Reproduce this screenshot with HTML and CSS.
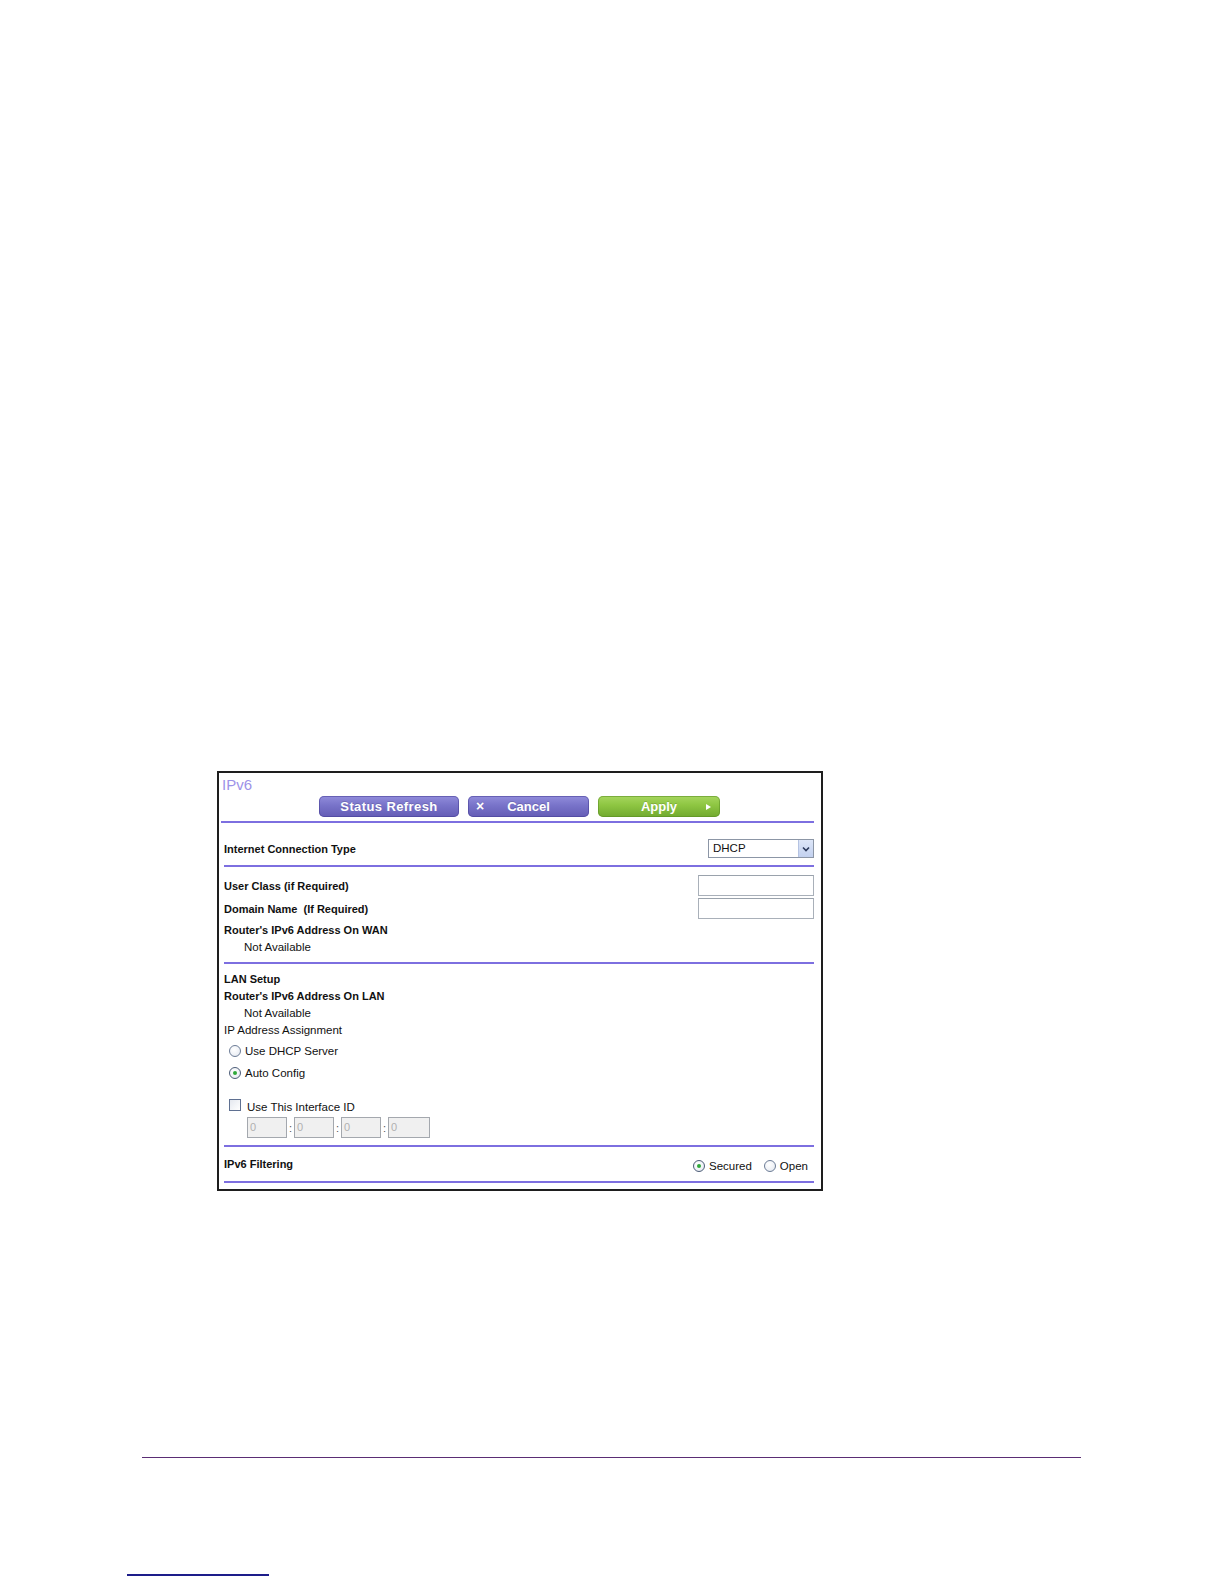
FILE: index.html
```html
<!DOCTYPE html>
<html lang="en">
<head>
<meta charset="utf-8">
<title>IPv6</title>
<link rel="stylesheet" href="styles.css">
</head>
<body>
<div class="page">
  <div class="frame">
    <div class="title">IPv6</div>
    <div class="actions">
      <button class="btn btn-purple btn-status">Status Refresh</button>
      <button class="btn btn-purple btn-cancel"><span class="x">&times;</span><span class="cancel-label">Cancel</span></button>
      <button class="btn btn-green btn-apply"><span></span><span>Apply</span><span class="tri"></span></button>
    </div>
    <div class="rule rule-top"></div>

    <div class="sec-conn">
      <span class="bold">Internet Connection Type</span>
      <div class="select"><span class="select-val">DHCP</span><span class="select-arrow"><svg width="8" height="6" viewBox="0 0 8 6"><path d="M1 1.5 L4 4.5 L7 1.5" fill="none" stroke="#2c3a5c" stroke-width="1.6"/></svg></span></div>
    </div>
    <div class="rule"></div>

    <div class="sec-wan">
      <div class="field-row">
        <span class="bold">User Class (if Required)</span>
        <span class="text-input"></span>
      </div>
      <div class="field-row field-row-2">
        <span class="bold">Domain Name&nbsp; (If Required)</span>
        <span class="text-input"></span>
      </div>
      <div class="line bold wan-head">Router's IPv6 Address On WAN</div>
      <div class="line indent">Not Available</div>
    </div>
    <div class="rule"></div>

    <div class="sec-lan">
      <div class="line bold">LAN Setup</div>
      <div class="line bold">Router's IPv6 Address On LAN</div>
      <div class="line indent">Not Available</div>
      <div class="line">IP Address Assignment</div>
      <div class="radio-row radio-first"><span class="radio"></span><span>Use DHCP Server</span></div>
      <div class="radio-row"><span class="radio checked"></span><span>Auto Config</span></div>
      <div class="check-row"><span class="checkbox"></span><span>Use This Interface ID</span></div>
      <div class="iid-row">
        <span class="iid">0</span><span class="colon">:</span>
        <span class="iid">0</span><span class="colon">:</span>
        <span class="iid">0</span><span class="colon">:</span>
        <span class="iid iid-last">0</span>
      </div>
    </div>
    <div class="rule"></div>

    <div class="sec-filter">
      <span class="bold">IPv6 Filtering</span>
      <div class="filter-opts">
        <span class="radio checked"></span><span class="opt-label">Secured</span>
        <span class="radio radio-open"></span><span class="opt-label">Open</span>
      </div>
    </div>
    <div class="rule"></div>
  </div>

  <div class="footer-rule"></div>
  <div class="footer-link"></div>
</div>
</body>
</html>
```

FILE: styles.css
```css
html, body {
  margin: 0;
  padding: 0;
  background: #ffffff;
}

body {
  width: 1224px;
  height: 1584px;
  overflow: hidden;
  font-family: "Liberation Sans", Arial, sans-serif;
  color: #111;
}

.page {
  padding-top: 771px;
}

.frame {
  box-sizing: border-box;
  margin-left: 217px;
  width: 606px;
  height: 420px;
  border: 2px solid #1e1e1e;
  background: #fff;
}

.title {
  box-sizing: border-box;
  height: 22px;
  padding: 2px 0 0 3px;
  line-height: 20px;
  font-size: 15px;
  color: #9d92e8;
}

.actions {
  display: flex;
  gap: 9px;
  margin-top: 1px;
  padding-left: 100px;
  height: 21px;
}

.btn {
  box-sizing: border-box;
  height: 21px;
  border: none;
  border-radius: 5px;
  padding: 0;
  margin: 0;
  font-family: "Liberation Sans", Arial, sans-serif;
  font-weight: bold;
  font-size: 13px;
  color: #fff;
  line-height: 21px;
  text-shadow: 0 -1px 0 rgba(0, 0, 0, 0.15);
}

.btn-purple {
  background: linear-gradient(#918cdb 0%, #7873c9 45%, #645cb5 100%);
  box-shadow: inset 0 0 0 1px rgba(70, 62, 150, 0.55);
}

.btn-green {
  background: linear-gradient(#a6d65e 0%, #8dc541 45%, #71a92f 100%);
  box-shadow: inset 0 0 0 1px rgba(90, 140, 35, 0.55);
}

.btn-status {
  width: 140px;
  letter-spacing: 0.4px;
  text-align: center;
}

.btn-cancel {
  width: 121px;
  display: flex;
  align-items: center;
  padding-left: 8px;
}

.btn-cancel .x {
  font-size: 14px;
}

.btn-cancel .cancel-label {
  margin-left: 23px;
}

.btn-apply {
  width: 122px;
  display: grid;
  grid-template-columns: 1fr auto 1fr;
  align-items: center;
}

.tri {
  justify-self: end;
  margin-right: 9px;
  width: 0;
  height: 0;
  border-top: 3px solid transparent;
  border-bottom: 3px solid transparent;
  border-left: 5px solid #fff;
}

.rule {
  height: 2px;
  background: #7d6fe0;
  margin: 0 7px 0 5px;
}

.rule-top {
  margin-top: 4px;
  margin-left: 2px;
}

.bold {
  font-weight: bold;
  font-size: 11px;
}

.sec-conn {
  display: flex;
  justify-content: space-between;
  align-items: center;
  padding: 16px 7px 7px 5px;
}

.select {
  box-sizing: border-box;
  width: 106px;
  height: 19px;
  border: 1px solid #8c96a6;
  display: flex;
  align-items: stretch;
  background: #fff;
}

.select-val {
  flex: 1;
  font-size: 11.5px;
  line-height: 17px;
  padding-left: 4px;
}

.select-arrow {
  width: 14px;
  display: flex;
  align-items: center;
  justify-content: center;
  background: linear-gradient(#dde6f8, #c3d1ef);
  border-left: 1px solid #b5c3e2;
}

.sec-wan {
  padding: 8px 7px 6px 5px;
}

.field-row {
  display: flex;
  justify-content: space-between;
  align-items: center;
  height: 21px;
}

.field-row-2 {
  margin-top: 2px;
}

.text-input {
  box-sizing: border-box;
  width: 116px;
  height: 21px;
  border: 1px solid #a9b0b9;
  border-top-color: #9aa2ac;
  background: #fff;
}

.line {
  height: 17px;
  line-height: 17px;
  font-size: 11.5px;
}

.line.bold {
  font-size: 11px;
}

.wan-head {
  margin-top: 3px;
}

.indent {
  padding-left: 20px;
}

.sec-lan {
  padding: 7px 7px 7px 5px;
}

.radio-row {
  display: flex;
  align-items: center;
  height: 22px;
  padding-left: 5px;
  font-size: 11.5px;
  gap: 4px;
}

.radio-first {
  margin-top: 1px;
}

.radio {
  box-sizing: border-box;
  width: 12px;
  height: 12px;
  border-radius: 50%;
  border: 1px solid #6c7c96;
  background: radial-gradient(circle at 40% 35%, #ffffff 0%, #eef1f6 60%, #d9dee8 100%);
  display: inline-flex;
  align-items: center;
  justify-content: center;
  flex: none;
}

.radio.checked {
  border-color: #4d5d78;
}

.radio.checked::after {
  content: "";
  width: 4px;
  height: 4px;
  border-radius: 50%;
  background: #2fa83a;
}

.check-row {
  display: flex;
  align-items: center;
  height: 18px;
  margin-top: 14px;
  padding-left: 5px;
  gap: 6px;
  font-size: 11.5px;
}

.checkbox {
  box-sizing: border-box;
  width: 12px;
  height: 12px;
  border: 1px solid #5f7091;
  background: linear-gradient(135deg, #e4e8ef, #ffffff);
  margin-bottom: 4px;
  flex: none;
}

.iid-row {
  display: flex;
  align-items: center;
  height: 21px;
  margin-top: 1px;
  padding-left: 23px;
}

.iid {
  box-sizing: border-box;
  width: 40px;
  height: 21px;
  border: 1px solid #a4a8ae;
  background: #f0f0f0;
  color: #b0b0b0;
  font-size: 11px;
  line-height: 19px;
  padding-left: 2px;
}

.iid-last {
  width: 42px;
}

.colon {
  width: 7px;
  text-align: center;
  font-size: 11px;
  color: #555;
}

.sec-filter {
  display: flex;
  justify-content: space-between;
  align-items: center;
  height: 34px;
  padding: 0 13px 0 5px;
}

.filter-opts {
  display: flex;
  align-items: center;
  font-size: 11.5px;
  padding-top: 3px;
}

.opt-label {
  margin-left: 4px;
}

.radio-open {
  margin-left: 12px;
}

.footer-rule {
  margin-top: 266px;
  margin-left: 142px;
  width: 939px;
  height: 1px;
  background: #5a2d74;
}

.footer-link {
  margin-top: 116px;
  margin-left: 127px;
  width: 142px;
  height: 2px;
  background: #1d1d8a;
}
```
